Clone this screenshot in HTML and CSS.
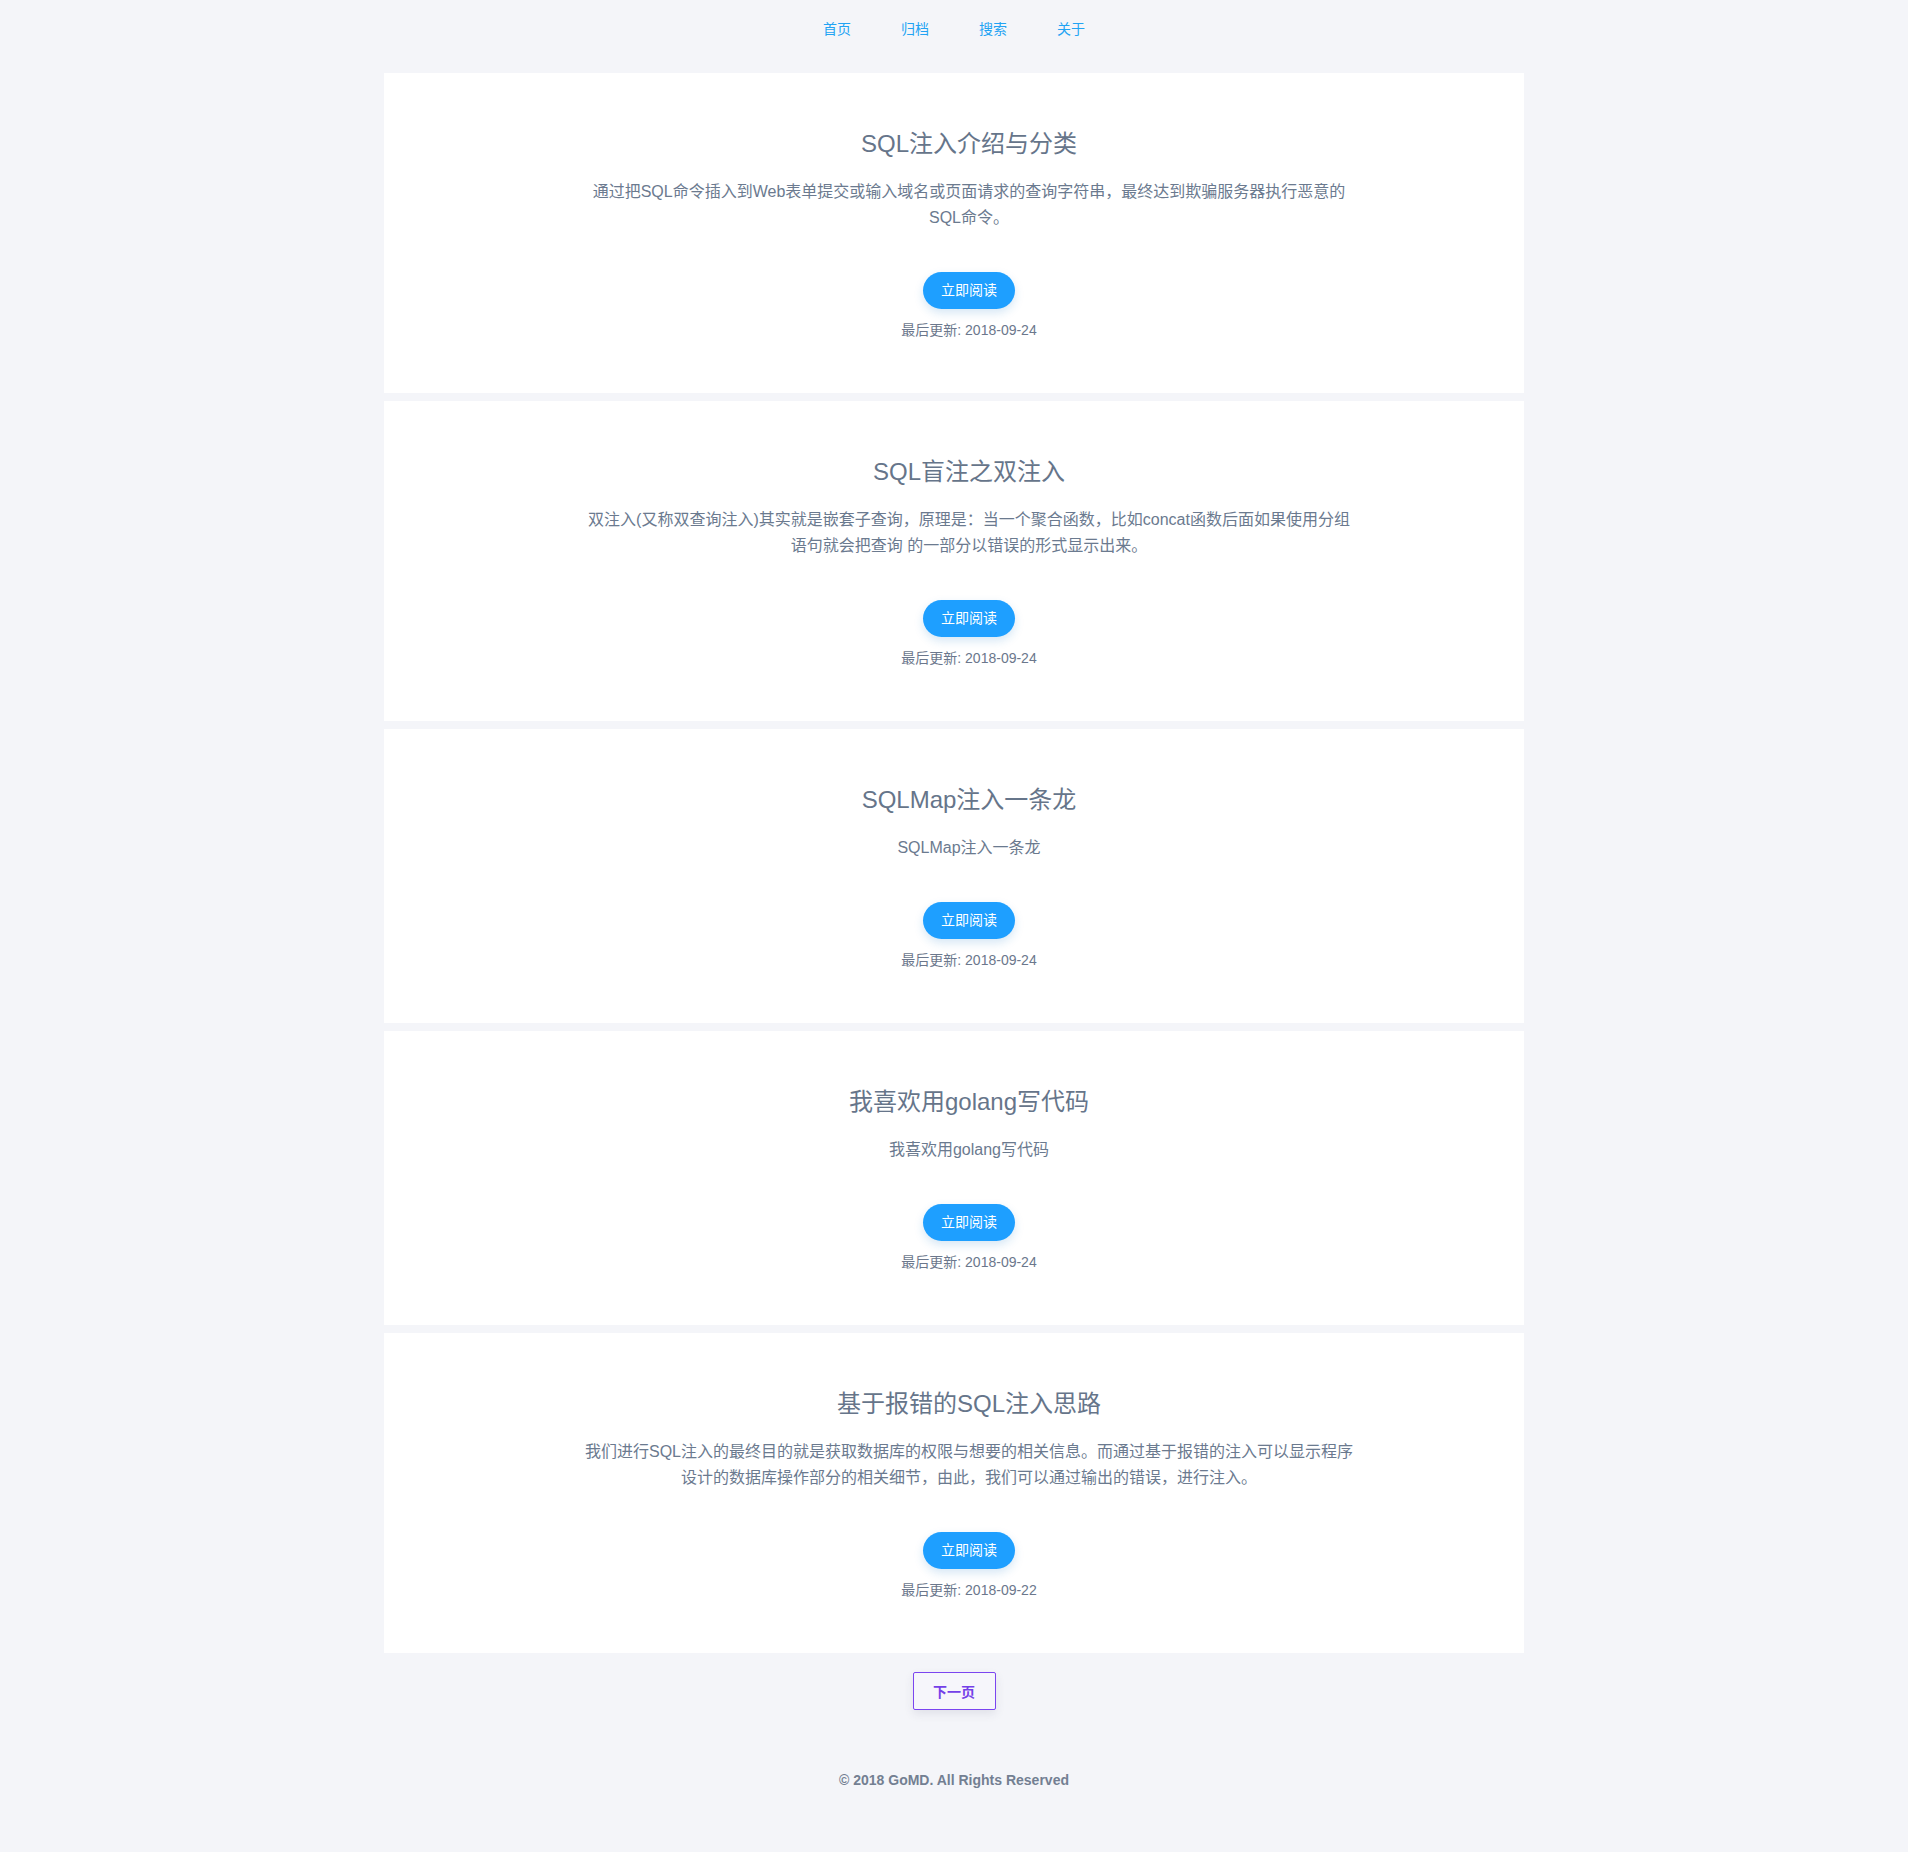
FILE: index.html
```html
<!DOCTYPE html>
<html lang="zh-CN">
<head>
<meta charset="utf-8">
<title>GoMD</title>
<link rel="stylesheet" href="styles.css">
</head>
<body>
<nav class="nav">
  <a class="nav-link" href="#">首页</a>
  <a class="nav-link" href="#">归档</a>
  <a class="nav-link" href="#">搜索</a>
  <a class="nav-link" href="#">关于</a>
</nav>
<main class="list">
  <article class="card">
    <h2 class="card-title">SQL注入介绍与分类</h2>
    <p class="card-desc">通过把SQL命令插入到Web表单提交或输入域名或页面请求的查询字符串，最终达到欺骗服务器执行恶意的SQL命令。</p>
    <a class="read-btn" href="#">立即阅读</a>
    <div class="card-date">最后更新: 2018-09-24</div>
  </article>
  <article class="card">
    <h2 class="card-title">SQL盲注之双注入</h2>
    <p class="card-desc">双注入(又称双查询注入)其实就是嵌套子查询，原理是：当一个聚合函数，比如concat函数后面如果使用分组语句就会把查询 的一部分以错误的形式显示出来。</p>
    <a class="read-btn" href="#">立即阅读</a>
    <div class="card-date">最后更新: 2018-09-24</div>
  </article>
  <article class="card">
    <h2 class="card-title">SQLMap注入一条龙</h2>
    <p class="card-desc">SQLMap注入一条龙</p>
    <a class="read-btn" href="#">立即阅读</a>
    <div class="card-date">最后更新: 2018-09-24</div>
  </article>
  <article class="card">
    <h2 class="card-title">我喜欢用golang写代码</h2>
    <p class="card-desc">我喜欢用golang写代码</p>
    <a class="read-btn" href="#">立即阅读</a>
    <div class="card-date">最后更新: 2018-09-24</div>
  </article>
  <article class="card">
    <h2 class="card-title">基于报错的SQL注入思路</h2>
    <p class="card-desc">我们进行SQL注入的最终目的就是获取数据库的权限与想要的相关信息。而通过基于报错的注入可以显示程序设计的数据库操作部分的相关细节，由此，我们可以通过输出的错误，进行注入。</p>
    <a class="read-btn" href="#">立即阅读</a>
    <div class="card-date">最后更新: 2018-09-22</div>
  </article>
</main>
<div class="pager">
  <a class="next-btn" href="#">下一页</a>
</div>
<footer class="footer">© 2018 GoMD. All Rights Reserved</footer>
</body>
</html>
```

FILE: styles.css
```css
html, body {
  margin: 0;
  padding: 0;
}
body {
  background: #f4f5f9;
  font-family: "Liberation Sans", "Noto Sans CJK SC", sans-serif;
  color: #67768b;
  min-height: 1852px;
}
a {
  text-decoration: none;
}
.nav {
  display: flex;
  justify-content: center;
  align-items: center;
  height: 73px;
  padding-bottom: 16px;
  box-sizing: border-box;
}
.nav-link {
  color: #22a3f3;
  font-size: 14px;
  line-height: 20px;
  padding: 0 25px;
}
.list {
  width: 1140px;
  margin: 0 auto;
  display: flex;
  flex-direction: column;
  gap: 8px;
}
.card {
  background: #ffffff;
  padding: 53px 0 52px 30px;
  display: flex;
  flex-direction: column;
  align-items: center;
  text-align: center;
}
.card-title {
  margin: 0;
  font-size: 24px;
  font-weight: normal;
  line-height: 36px;
  color: #66758a;
}
.card-desc {
  margin: 17px 0 0;
  max-width: 770px;
  font-size: 16px;
  line-height: 26px;
  color: #6b7a8f;
}
.read-btn {
  margin-top: 41px;
  height: 37px;
  line-height: 37px;
  padding: 0 18px;
  border-radius: 19px;
  background: #1e9fff;
  color: #ffffff;
  font-size: 14px;
  box-shadow: 0 4px 10px rgba(30, 120, 200, 0.18);
}
.card-date {
  margin-top: 11px;
  font-size: 14px;
  line-height: 21px;
  color: #6b778c;
}
.pager {
  display: flex;
  justify-content: center;
  padding-top: 19px;
}
.next-btn {
  width: 83px;
  height: 38px;
  box-sizing: border-box;
  border: 1px solid #7b45f0;
  border-radius: 2px;
  display: flex;
  align-items: center;
  justify-content: center;
  color: #7440e8;
  font-weight: bold;
  font-size: 14px;
  background: #f6f6fb;
  box-shadow: 0 4px 10px rgba(60, 60, 100, 0.1);
}
.footer {
  text-align: center;
  margin-top: 60px;
  font-size: 14px;
  line-height: 20px;
  font-weight: bold;
  color: #737f92;
  padding-bottom: 62px;
}
```
